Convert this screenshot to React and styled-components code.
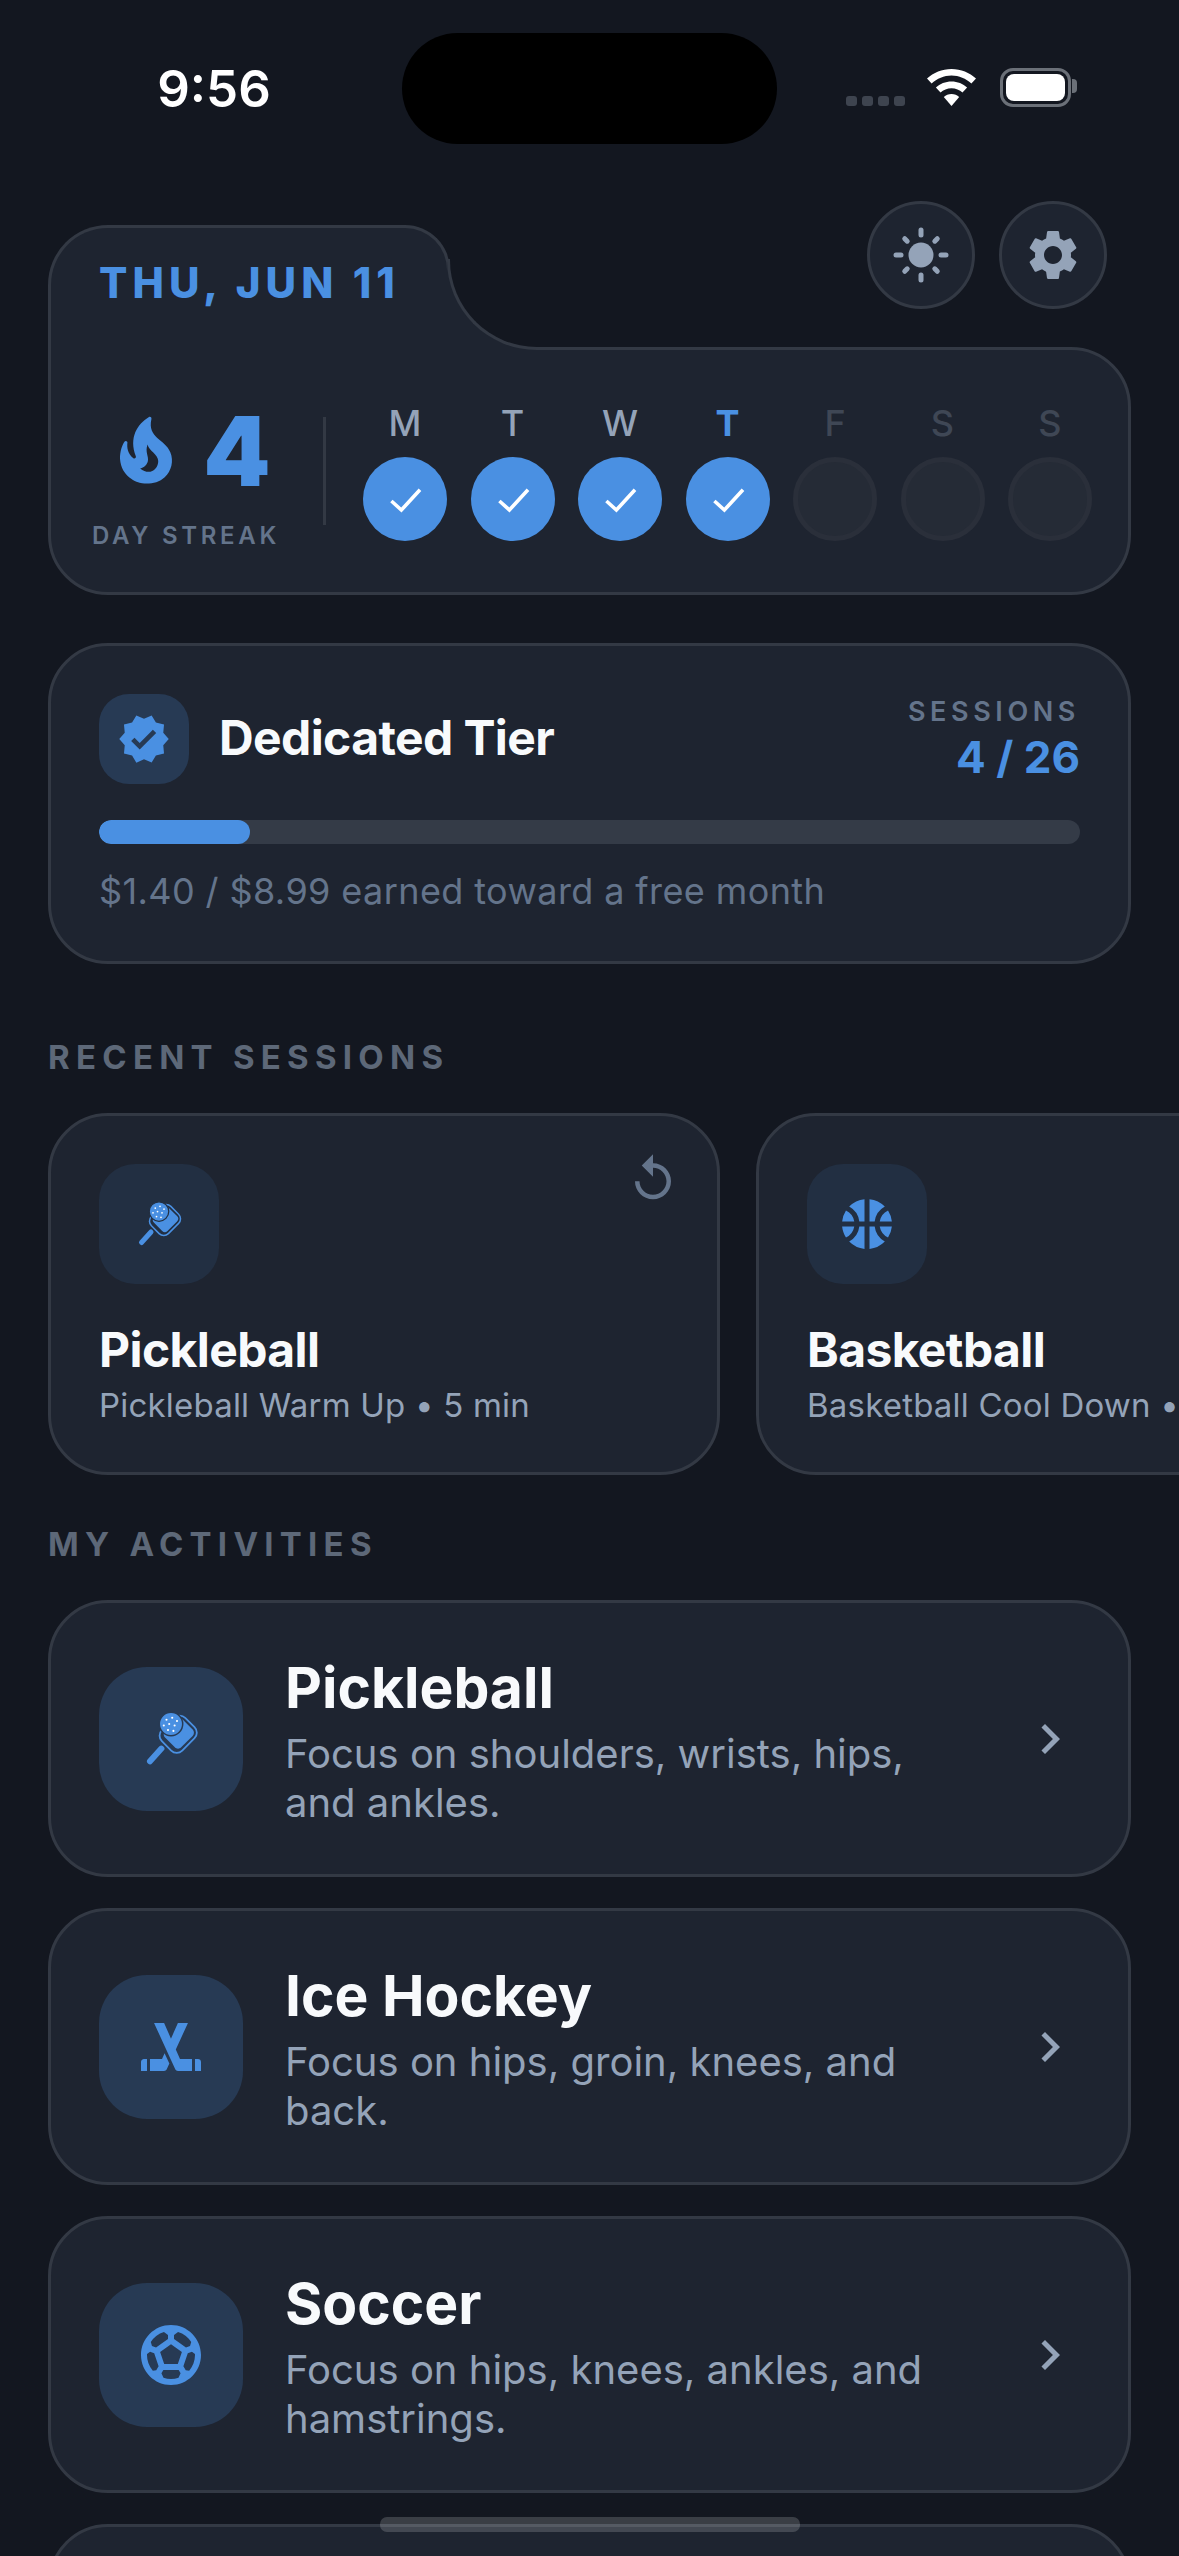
import React from "react";
import styled, { createGlobalStyle } from "styled-components";
import { MdSettings, MdReplay, MdSportsBasketball, MdSportsHockey, MdSportsSoccer, MdChevronRight, MdVerified } from "react-icons/md";

const BG = "#131720";
const CARD = "#1e2430";
const LINE = "#333944";
const BLUE = "#4a90e2";

const Global = createGlobalStyle`
  html, body { margin: 0; padding: 0; background: ${BG}; }
  * { box-sizing: border-box; }
  body { font-family: Inter, "Noto Sans", sans-serif; color: #f8fafc; }
`;

const Screen = styled.div`
  position: relative;
  width: 1179px;
  height: 2556px;
  overflow: hidden;
  background: ${BG};
`;

const StatusBar = styled.div`
  display: grid;
  grid-template-columns: 402px 375px 1fr;
  height: 201px;
  padding-top: 33px;
`;

const Time = styled.div`
  padding: 26px 0 0 26px;
  text-align: center;
  font-size: 51px;
  line-height: 60px;
  font-weight: 600;
  color: #fff;
`;

const Island = styled.div`
  height: 111px;
  border-radius: 56px;
  background: #000;
`;

const StatusIcons = styled.div`
  display: flex;
  align-items: flex-start;
  padding: 36px 0 0 69px;
`;

const Signal = styled.div`
  display: flex;
  gap: 5px;
  margin: 27px 21px 0 0;
`;

const SignalDot = styled.span`
  width: 11px;
  height: 10px;
  border-radius: 3px;
  background: #3e444f;
`;

const Battery = styled.div`
  position: relative;
  width: 71px;
  height: 39px;
  margin: -1px 0 0 23px;
  padding: 3px;
  border: 3px solid #6b7078;
  border-radius: 13px;
  &::after {
    content: "";
    position: absolute;
    left: 100%;
    top: 8px;
    margin-left: 4px;
    width: 5px;
    height: 14px;
    border-radius: 0 4px 4px 0;
    background: #6b7078;
  }
`;

const BatteryFill = styled.div`
  height: 100%;
  border-radius: 8px;
  background: #fff;
`;

const Content = styled.div`
  padding: 0 48px;
`;

const TopRow = styled.div`
  display: flex;
  justify-content: space-between;
  height: 149px;
  margin-bottom: -3px;
  padding-right: 24px;
`;

const DateTab = styled.div`
  position: relative;
  z-index: 1;
  align-self: flex-end;
  width: 402px;
  height: 125px;
  padding: 30px 0 0 48px;
  background: ${CARD};
  border: 3px solid ${LINE};
  border-bottom: 0;
  border-radius: 60px 45px 0 0;
  font-size: 42px;
  line-height: 50px;
  font-weight: 800;
  letter-spacing: 5.1px;
  color: ${BLUE};
  &::before, &::after {
    content: "";
    position: absolute;
    left: 100%;
    bottom: 0;
    width: 90px;
    height: 88px;
  }
  &::before {
    background: ${CARD};
  }
  &::after {
    background: ${BG};
    border-left: 3px solid ${LINE};
    border-bottom: 3px solid ${LINE};
    border-bottom-left-radius: 90px;
  }
`;

const TopButtons = styled.div`
  display: flex;
  gap: 24px;
`;

const RoundButton = styled.div`
  display: flex;
  align-items: center;
  justify-content: center;
  width: 108px;
  height: 108px;
  border-radius: 50%;
  background: ${CARD};
  border: 3px solid ${LINE};
  color: #94a3b8;
`;

const StreakBody = styled.div`
  display: flex;
  align-items: center;
  height: 248px;
  padding: 0 36px 0 43px;
  background: ${CARD};
  border: 3px solid ${LINE};
  border-radius: 0 60px 60px 60px;
`;

const StreakCol = styled.div`
  display: flex;
  flex-direction: column;
  align-items: center;
  width: 184px;
  flex-shrink: 0;
  padding-top: 10px;
`;

const StreakValue = styled.div`
  display: flex;
  align-items: center;
  gap: 18px;
  height: 100px;
  padding-left: 6px;
  font-size: 96px;
  line-height: 100px;
  font-weight: 900;
  color: ${BLUE};
`;

const StreakLabel = styled.div`
  margin-top: 20px;
  font-size: 24px;
  line-height: 30px;
  font-weight: 600;
  letter-spacing: 3.7px;
  white-space: nowrap;
  color: #64748b;
`;

const Divider = styled.div`
  width: 3px;
  height: 108px;
  margin: 0 37px 0 45px;
  background: ${LINE};
`;

const Days = styled.div`
  flex: 1;
  display: flex;
  justify-content: space-between;
`;

const Day = styled.div`
  display: flex;
  flex-direction: column;
  align-items: center;
  gap: 12px;
`;

const DayLetter = styled.div`
  font-size: 36px;
  line-height: 44px;
  font-weight: ${p => (p.$today ? 700 : 500)};
  color: ${p => (p.$today ? BLUE : p.$future ? "#3f4755" : "#94a3b8")};
`;

const DayDot = styled.div`
  display: flex;
  align-items: center;
  justify-content: center;
  width: 84px;
  height: 84px;
  border-radius: 50%;
  color: #fff;
  background: ${p => (p.$done ? BLUE : "#252b36")};
  border: ${p => (p.$done ? "none" : "5px solid #2a2f3a")};
`;

const Card = styled.div`
  background: ${CARD};
  border: 3px solid ${LINE};
  border-radius: 60px;
`;

const TierCard = styled(Card)`
  height: 321px;
  margin-top: 48px;
  padding: 48px;
`;

const TierHead = styled.div`
  display: flex;
  align-items: center;
  justify-content: space-between;
  height: 90px;
`;

const TierName = styled.div`
  display: flex;
  align-items: center;
  gap: 30px;
`;

const TierTitle = styled.span`
  margin-bottom: 3px;
  font-size: 48px;
  font-weight: 700;
  letter-spacing: -0.6px;
`;

const TierBadge = styled.div`
  display: flex;
  align-items: center;
  justify-content: center;
  width: 90px;
  height: 90px;
  border-radius: 30px;
  background: #273a54;
  color: ${BLUE};
`;

const Sessions = styled.div`
  text-align: right;
  padding-top: 2px;
`;

const SessionsLabel = styled.div`
  font-size: 27px;
  line-height: 32px;
  font-weight: 600;
  letter-spacing: 4.6px;
  color: #64748b;
`;

const SessionsValue = styled.div`
  margin-top: 2px;
  font-size: 44px;
  line-height: 54px;
  font-weight: 700;
  color: ${BLUE};
`;

const Track = styled.div`
  height: 24px;
  margin-top: 36px;
  border-radius: 12px;
  background: #343b47;
  overflow: hidden;
`;

const Fill = styled.div`
  height: 100%;
  border-radius: 12px;
  background: ${BLUE};
`;

const TierNote = styled.div`
  margin-top: 25px;
  font-size: 36px;
  line-height: 44px;
  letter-spacing: 0.4px;
  color: #64748b;
`;

const SectionLabel = styled.div`
  margin: ${p => p.$top}px 0 36px;
  font-size: 33px;
  line-height: 40px;
  font-weight: 700;
  letter-spacing: 6.25px;
  color: #5d6878;
`;

const RecentRow = styled.div`
  display: flex;
  gap: 36px;
  width: 1131px;
`;

const RecentCard = styled(Card)`
  position: relative;
  flex: 0 0 672px;
  height: 362px;
  padding: 48px;
`;

const ReplayBtn = styled.div`
  position: absolute;
  top: 36px;
  right: 37px;
  display: flex;
  color: #64748b;
`;

const RecentTile = styled.div`
  display: flex;
  align-items: center;
  justify-content: center;
  width: 120px;
  height: 120px;
  border-radius: 36px;
  background: #222f42;
  color: ${BLUE};
`;

const RecentTitle = styled.div`
  margin-top: 37px;
  font-size: 48px;
  line-height: 58px;
  font-weight: 700;
  letter-spacing: -0.6px;
`;

const RecentSub = styled.div`
  margin-top: 4px;
  font-size: 33px;
  line-height: 44px;
  letter-spacing: 0.2px;
  white-space: nowrap;
  color: #94a3b8;
`;

const ActivityList = styled.div`
  display: flex;
  flex-direction: column;
  gap: 31px;
`;

const ActivityCard = styled(Card)`
  display: flex;
  align-items: center;
  gap: 42px;
  height: 277px;
  padding: 0 48px;
`;

const ActivityTile = styled.div`
  display: flex;
  align-items: center;
  justify-content: center;
  flex-shrink: 0;
  width: 144px;
  height: 144px;
  border-radius: 48px;
  background: #273a54;
  color: ${BLUE};
`;

const ActivityText = styled.div`
  flex: 1;
  padding: 2px 20px 0 0;
`;

const ActivityTitle = styled.div`
  font-size: 57px;
  line-height: 70px;
  font-weight: 700;
`;

const ActivityDesc = styled.div`
  margin-top: 6px;
  font-size: 40px;
  line-height: 49px;
  color: #94a3b8;
`;

const Chevron = styled.div`
  display: flex;
  color: #94a3b8;
`;

const HomeBar = styled.div`
  position: absolute;
  left: 380px;
  bottom: 24px;
  width: 420px;
  height: 15px;
  border-radius: 7px;
  background: rgba(255, 255, 255, 0.17);
`;

function Wifi() {
  return (
    <svg width="51" height="37" viewBox="0 0 51 37" fill="#fff">
      <path d="M25.5 0C16 0 7.5 3.6 1 9.6l4.6 5C11 9.6 18 6.6 25.5 6.6s14.5 3 19.9 8l4.6-5C43.5 3.6 35 0 25.5 0z" />
      <path d="M25.5 12.5c-6 0-11.5 2.3-15.6 6l4.6 5c2.9-2.6 6.8-4.2 11-4.2s8.1 1.6 11 4.2l4.6-5c-4.1-3.7-9.6-6-15.6-6z" />
      <path d="M25.5 25c-3 0-5.7 1.1-7.7 3l7.7 9 7.7-9c-2-1.9-4.7-3-7.7-3z" />
    </svg>
  );
}

function Sun() {
  const rays = [0, 90, 180, 270].map(a => ({ a, from: 20, to: 25 }))
    .concat([45, 135, 225, 315].map(a => ({ a, from: 19.5, to: 23 })));
  return (
    <svg width="60" height="60" viewBox="0 0 60 60" fill="currentColor">
      <circle cx="30" cy="30" r="12.5" />
      {rays.map(r => (
        <line key={r.a} x1="30" y1={30 - r.from} x2="30" y2={30 - r.to} stroke="currentColor" strokeWidth="5" strokeLinecap="round" transform={`rotate(${r.a} 30 30)`} />
      ))}
    </svg>
  );
}

function Flame() {
  return (
    <svg width="78" height="78" viewBox="0 0 24 24" fill="currentColor">
      <path d="M19.48 12.35c-1.57-4.08-7.16-4.3-5.81-10.23.1-.44-.37-.78-.75-.55C9.29 3.71 6.68 8 8.87 13.62c.18.46-.36.89-.75.59-1.81-1.37-2-3.34-1.84-4.75.06-.52-.62-.77-.91-.34C4.69 10.16 4 11.84 4 14.37c.38 5.6 5.11 7.32 6.81 7.54 2.43.31 5.06-.14 6.95-1.87 2.08-1.93 2.84-5.01 1.72-7.69zm-9.28 5.03c1.44-.35 2.18-1.39 2.38-2.31.33-1.43-.96-2.83-.09-5.09.33 1.87 3.27 3.04 3.27 5.08.08 2.53-2.66 4.7-5.56 2.32z" />
    </svg>
  );
}

function Check() {
  return (
    <svg width="42" height="42" viewBox="0 0 42 42" fill="none" stroke="currentColor" strokeWidth="3.6">
      <polyline points="7.4,23 17.4,32 36,11.7" />
    </svg>
  );
}

function Paddle({ size, ring }) {
  return (
    <svg width={size} height={size} viewBox="0 0 24 24" fill="none">
      <line x1="8.8" y1="15.2" x2="5" y2="19.4" stroke="currentColor" strokeWidth="2" strokeLinecap="round" />
      <rect x="9.6" y="4.9" width="9.6" height="11" rx="2.6" transform="rotate(45 14.4 10.4)" stroke="currentColor" strokeWidth="0.6" />
      <rect x="10.6" y="5.9" width="7.6" height="8.4" rx="1.5" transform="rotate(45 14.4 10.4)" fill="currentColor" />
      <circle cx="12" cy="7" r="3.9" fill="currentColor" stroke={ring} strokeWidth="0.5" />
      <g fill="#fff">
        <circle cx="10.5" cy="5.6" r="0.35" />
        <circle cx="12.4" cy="4.9" r="0.35" />
        <circle cx="14" cy="6" r="0.35" />
        <circle cx="11.4" cy="7" r="0.35" />
        <circle cx="13.2" cy="7.5" r="0.35" />
        <circle cx="9.6" cy="7.5" r="0.35" />
        <circle cx="11" cy="9" r="0.35" />
        <circle cx="12.8" cy="9.3" r="0.35" />
      </g>
    </svg>
  );
}

const week = [
  { d: "M", done: true },
  { d: "T", done: true },
  { d: "W", done: true },
  { d: "T", done: true, today: true },
  { d: "F" },
  { d: "S" },
  { d: "S" },
];

const activities = [
  { name: "Pickleball", desc: "Focus on shoulders, wrists, hips, and ankles.", icon: <Paddle size={72} ring="#273a54" /> },
  { name: "Ice Hockey", desc: "Focus on hips, groin, knees, and back.", icon: <MdSportsHockey size={72} /> },
  { name: "Soccer", desc: "Focus on hips, knees, ankles, and hamstrings.", icon: <MdSportsSoccer size={72} /> },
];

export default function App() {
  return (
    <Screen>
      <Global />
      <StatusBar>
        <Time>9:56</Time>
        <Island />
        <StatusIcons>
          <Signal>
            <SignalDot /><SignalDot /><SignalDot /><SignalDot />
          </Signal>
          <Wifi />
          <Battery><BatteryFill /></Battery>
        </StatusIcons>
      </StatusBar>
      <Content>
        <TopRow>
          <DateTab>THU, JUN 11</DateTab>
          <TopButtons>
            <RoundButton><Sun /></RoundButton>
            <RoundButton><MdSettings size={60} /></RoundButton>
          </TopButtons>
        </TopRow>
        <StreakBody>
          <StreakCol>
            <StreakValue><Flame />4</StreakValue>
            <StreakLabel>DAY STREAK</StreakLabel>
          </StreakCol>
          <Divider />
          <Days>
            {week.map((w, i) => (
              <Day key={i}>
                <DayLetter $today={w.today} $future={!w.done}>{w.d}</DayLetter>
                <DayDot $done={w.done}>{w.done && <Check />}</DayDot>
              </Day>
            ))}
          </Days>
        </StreakBody>
        <TierCard>
          <TierHead>
            <TierName>
              <TierBadge><MdVerified size={54} /></TierBadge>
              <TierTitle>Dedicated Tier</TierTitle>
            </TierName>
            <Sessions>
              <SessionsLabel>SESSIONS</SessionsLabel>
              <SessionsValue>4 / 26</SessionsValue>
            </Sessions>
          </TierHead>
          <Track><Fill style={{ width: `${(4 / 26) * 100}%` }} /></Track>
          <TierNote>$1.40 / $8.99 earned toward a free month</TierNote>
        </TierCard>
        <SectionLabel $top={73}>RECENT SESSIONS</SectionLabel>
        <RecentRow>
          <RecentCard>
            <ReplayBtn><MdReplay size={54} /></ReplayBtn>
            <RecentTile><Paddle size={60} ring="#222f42" /></RecentTile>
            <RecentTitle>Pickleball</RecentTitle>
            <RecentSub>Pickleball Warm Up • 5 min</RecentSub>
          </RecentCard>
          <RecentCard>
            <ReplayBtn><MdReplay size={54} /></ReplayBtn>
            <RecentTile><MdSportsBasketball size={60} /></RecentTile>
            <RecentTitle>Basketball</RecentTitle>
            <RecentSub>Basketball Cool Down • 5 min</RecentSub>
          </RecentCard>
        </RecentRow>
        <SectionLabel $top={49}>MY ACTIVITIES</SectionLabel>
        <ActivityList>
          {activities.map(a => (
            <ActivityCard key={a.name}>
              <ActivityTile>{a.icon}</ActivityTile>
              <ActivityText>
                <ActivityTitle>{a.name}</ActivityTitle>
                <ActivityDesc>{a.desc}</ActivityDesc>
              </ActivityText>
              <Chevron><MdChevronRight size={60} /></Chevron>
            </ActivityCard>
          ))}
          <ActivityCard />
        </ActivityList>
      </Content>
      <HomeBar />
    </Screen>
  );
}
